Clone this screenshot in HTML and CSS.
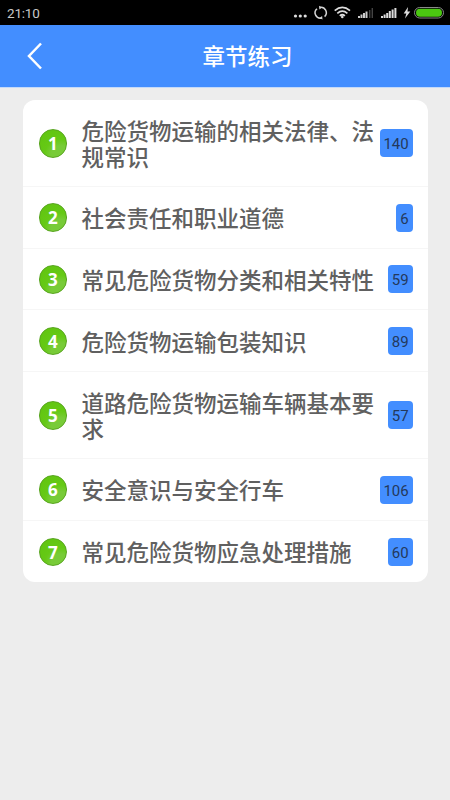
FILE: index.html
```html
<!DOCTYPE html>
<html lang="zh-CN">
<head>
<meta charset="utf-8">
<title>章节练习</title>
<link rel="stylesheet" href="styles.css">
</head>
<body>
<div class="status">
  <span class="time">21:10</span>
  <svg class="icons" width="160" height="25" viewBox="0 0 160 25">
    <g fill="#ddd"><circle cx="5.5" cy="16" r="1.6"/><circle cx="10.3" cy="16" r="1.6"/><circle cx="15.2" cy="16" r="1.6"/></g>
    <g fill="none" stroke="#d4d4d4" stroke-width="1.5">
      <path d="M31.6 18.1A5.4 5.4 0 0 1 27 8.7M29.8 7.4A5.4 5.4 0 0 1 34.6 16.6"/>
    </g>
    <path fill="#d4d4d4" d="M29 5.8l3 1.6-2.6 2zM32.5 19.6l-3-1.6 2.6-2z"/>
    <g fill="none" stroke="#ddd" stroke-width="1.7"><path d="M44.7 10.6Q52.3 4.3 60 10.6M47.3 13.3Q52.3 9.1 57.4 13.3M49.8 15.8Q52.3 13.7 54.9 15.8"/></g>
    <circle cx="52.3" cy="17" r="1.3" fill="#ddd"/>
    <g fill="#ccc"><path d="M68 16h2v2h-2zM70.5 14.5h2V18h-2zM73 13h2v5h-2zM75.5 11.5h2V18h-2z"/><path fill="#444" d="M79 10h1.4v8H79zM81.6 8H83v10h-1.4z"/></g>
    <path fill="#ddd" d="M91 16h2v2h-2zM93.6 14.5h2V18h-2zM96.2 13h2v5h-2zM98.8 11h2v7h-2zM101.6 9.5h2V18h-2zM104.4 8h2v10h-2z"/>
    <path fill="#ddd" d="M118 7l-4.3 6.5h2.6L115 18.5l5.3-7h-2.8z"/>
    <rect x="124.5" y="7.5" width="29" height="10.5" rx="5.2" fill="#000" stroke="#888"/>
    <rect x="126" y="8.8" width="26" height="8" rx="4" fill="#4bc811"/>
  </svg>
</div>
<header class="bar">
  <svg class="back" width="16" height="28" viewBox="0 0 16 28"><path d="M14 1.5L2 14l12 12.5" fill="none" stroke="#fff" stroke-width="2.5"/></svg>
  <h1>章节练习</h1>
</header>
<main class="card">
  <div class="row tall"><span class="num">1</span><span class="name">危险货物运输的相关法律、法规常识</span><span class="count">140</span></div>
  <div class="row"><span class="num">2</span><span class="name">社会责任和职业道德</span><span class="count">6</span></div>
  <div class="row"><span class="num">3</span><span class="name">常见危险货物分类和相关特性</span><span class="count">59</span></div>
  <div class="row"><span class="num">4</span><span class="name">危险货物运输包装知识</span><span class="count">89</span></div>
  <div class="row tall"><span class="num">5</span><span class="name">道路危险货物运输车辆基本要求</span><span class="count">57</span></div>
  <div class="row"><span class="num">6</span><span class="name">安全意识与安全行车</span><span class="count">106</span></div>
  <div class="row"><span class="num">7</span><span class="name">常见危险货物应急处理措施</span><span class="count">60</span></div>
</main>
</body>
</html>
```
FILE: styles.css
```css
* { box-sizing: border-box; }
body {
  margin: 0;
  min-height: 800px;
  background: #ededed;
  font-family: Roboto, "Noto Sans CJK SC", sans-serif;
}
.status {
  height: 25px;
  background: #000;
  display: flex;
  justify-content: space-between;
  padding-left: 7px;
}
.time { color: #c8c8c8; font-size: 13.5px; line-height: 27px; letter-spacing: -0.2px; }
.bar {
  height: 63px;
  background: #438eff;
  border-bottom: 1px solid #c4dafa;
  display: grid;
  grid-template-columns: 45px 1fr;
  align-items: center;
}
.back { justify-self: end; margin-right: 2.5px; }
.bar h1 {
  margin: 0;
  padding-top: 2px;
  text-align: center;
  color: #fff;
  font-size: 22.5px;
  line-height: 30px;
  font-weight: 500;
}
.card {
  margin: 12px 22.5px 0;
  background: #fff;
  border-radius: 12px;
}
.row {
  height: 61.75px;
  display: flex;
  align-items: center;
  padding: 1px 15px 0 16px;
  border-bottom: 1px solid #f6f6f6;
}
.row:last-child { border-bottom: 0; }
.tall { height: 86.75px; }
.num {
  flex: none;
  width: 28.5px;
  height: 28.5px;
  border-radius: 50%;
  border: 1.5px solid #58a51f;
  background: radial-gradient(circle at 80% 95%, #78cb38 0 30%, #65c915 50%, #60c40f 100%);
  color: #fff;
  font: bold 17px/27px "Open Sans", sans-serif;
  text-align: center;
}
.name {
  flex: 1;
  margin-left: 14.5px;
  padding-top: 3px;
  color: #606060;
  font-size: 22.5px;
  line-height: 26px;
  font-weight: 500;
  word-break: break-all;
}
.count {
  flex: none;
  height: 28px;
  padding: 0 4px;
  border-radius: 4px;
  background: #438eff;
  color: #23395c;
  font-size: 15px;
  line-height: 30px;
  letter-spacing: -0.1px;
}
```
